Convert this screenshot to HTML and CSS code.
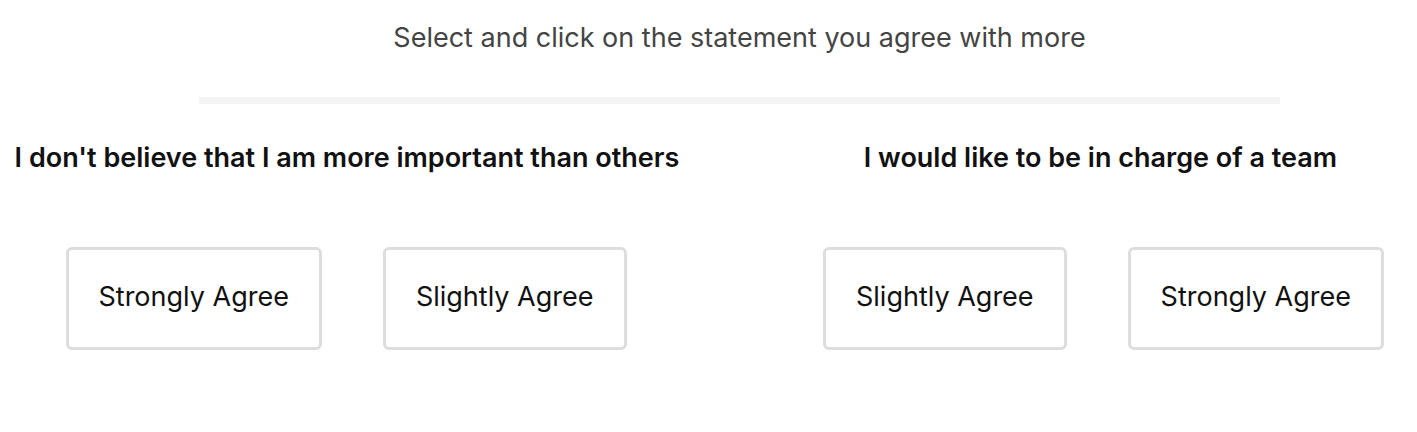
FILE: index.html
```html
<!DOCTYPE html>
<html lang="en">
<head>
<meta charset="utf-8">
<title>Statements</title>
<link rel="stylesheet" href="styles.css">
</head>
<body>
  <section class="intro">
    <p class="prompt">Select and click on the statement you agree with more</p>
    <div class="divider"></div>
  </section>
  <section class="pairs">
    <div class="statement statement-left">
      <h2 class="statement-title">I don't believe that I am more important than others</h2>
      <div class="choices choices-left">
        <button class="choice" type="button">Strongly Agree</button>
        <button class="choice" type="button">Slightly Agree</button>
      </div>
    </div>
    <div class="statement statement-right">
      <h2 class="statement-title">I would like to be in charge of a team</h2>
      <div class="choices choices-right">
        <button class="choice" type="button">Slightly Agree</button>
        <button class="choice" type="button">Strongly Agree</button>
      </div>
    </div>
  </section>
</body>
</html>
```

FILE: styles.css
```css
* {
  box-sizing: border-box;
}

html, body {
  margin: 0;
  padding: 0;
  background: #ffffff;
}

body {
  font-family: Inter, "Noto Sans", "Liberation Sans", sans-serif;
  color: #111111;
  width: 1417px;
  height: 432px;
  overflow: hidden;
}

.intro {
  margin: 0 137px 0 199px;
  padding-top: 21px;
}

.prompt {
  margin: 0;
  text-align: center;
  font-size: 27px;
  font-weight: 400;
  line-height: normal;
  color: #444444;
  white-space: nowrap;
}

.divider {
  margin-top: 43px;
  height: 7px;
  background: #f3f3f3;
}

.pairs {
  display: flex;
  margin-top: 37px;
}

.statement {
  display: flex;
  flex-direction: column;
  align-items: center;
}

.statement-left {
  width: 694px;
}

.statement-right {
  width: 633px;
  margin-left: 90px;
}

.statement-title {
  margin: 0;
  font-size: 27px;
  font-weight: 600;
  line-height: normal;
  color: #111111;
  white-space: nowrap;
}

.choices {
  display: flex;
  gap: 61px;
  margin-top: 73px;
}

.choices-left {
  margin-right: 2px;
}

.choices-right {
  margin-left: 6px;
}

.choice {
  font-family: inherit;
  font-size: 27px;
  font-weight: 400;
  line-height: normal;
  color: #111111;
  background: #ffffff;
  border: 3px solid #dddddd;
  border-radius: 6px;
  padding: 30px 30px 34px;
  cursor: pointer;
  white-space: nowrap;
}
```
